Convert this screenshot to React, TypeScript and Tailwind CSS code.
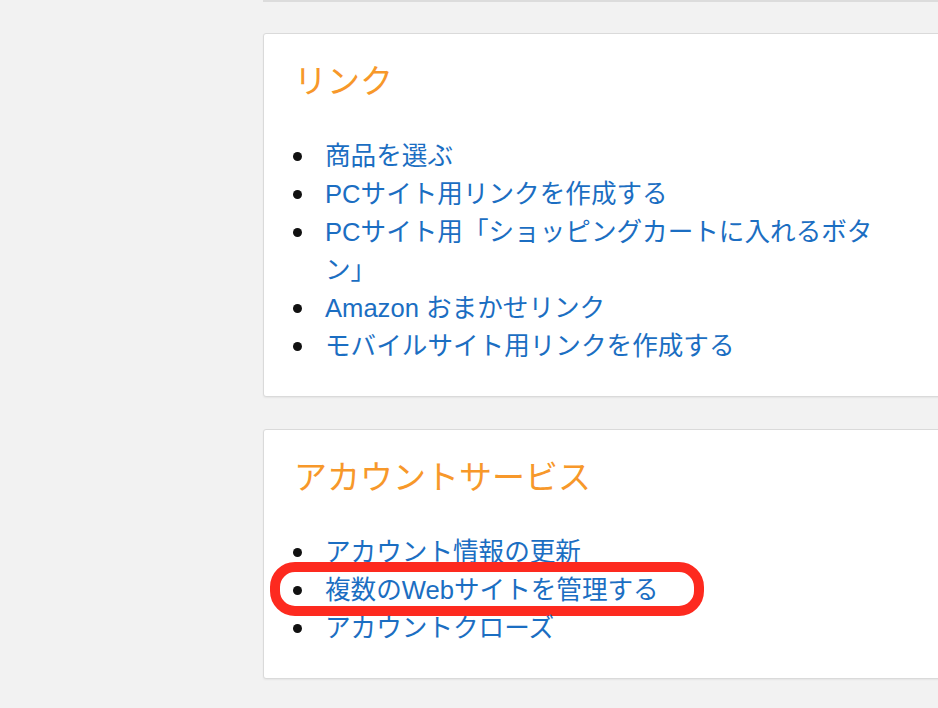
const linkItems = [
  "商品を選ぶ",
  "PCサイト用リンクを作成する",
  "PCサイト用「ショッピングカートに入れるボタン」",
  "Amazon おまかせリンク",
  "モバイルサイト用リンクを作成する",
];

const accountItems = [
  { label: "アカウント情報の更新" },
  { label: "複数のWebサイトを管理する", marked: true },
  { label: "アカウントクローズ" },
];

const Card = ({ title, children }: { title: string; children: React.ReactNode }) => (
  <div className="w-[720px] bg-white border border-[#dadada] rounded-[3px] shadow-[0_1px_2px_rgba(0,0,0,0.06)] pt-[28px] pb-[31px] pl-[30px]">
    <h2 className="text-[#f7982a] text-[33px] leading-[40px] font-normal">{title}</h2>
    <ul className="mt-[35px] max-w-[592px] text-[25.6px] leading-[38px]">{children}</ul>
  </div>
);

const Item = ({ label, marked }: { label: string; marked?: boolean }) => (
  <li className="relative flex items-start">
    <span className="mt-[15px] ml-[-1px] w-[9px] h-[9px] shrink-0 rounded-full bg-[#111]" />
    <a href="#" className="ml-[23px] text-[#1b6ec2]">{label}</a>
    {marked && (
      <span className="pointer-events-none absolute left-[-24px] top-[-9px] w-[434px] h-[54px] rounded-[25px] border-[10px] border-[#fd2a1f]" />
    )}
  </li>
);

export default function App() {
  return (
    <div
      className="w-[938px] h-[708px] overflow-hidden bg-[#f2f2f2]"
      style={{ fontFamily: '"Liberation Sans", "Noto Sans CJK JP", sans-serif' }}
    >
      <div className="ml-[263px]">
        <div className="h-[2px] w-[720px] bg-[#dcdcdc]" />
        <div className="mt-[31px] flex flex-col gap-[32px]">
          <Card title="リンク">
            {linkItems.map((item) => (
              <Item key={item} label={item} />
            ))}
          </Card>
          <Card title="アカウントサービス">
            {accountItems.map((item) => (
              <Item key={item.label} label={item.label} marked={item.marked} />
            ))}
          </Card>
        </div>
      </div>
    </div>
  );
}
